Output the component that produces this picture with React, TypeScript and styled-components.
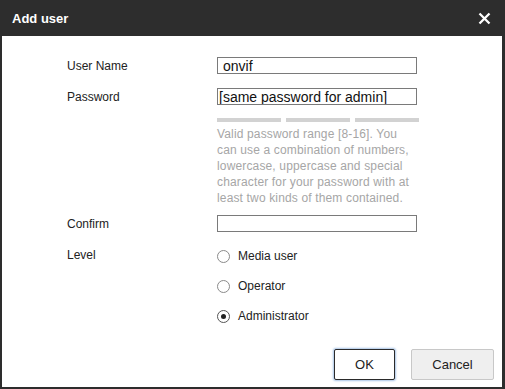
import React from "react";
import styled, { createGlobalStyle } from "styled-components";

const GlobalStyle = createGlobalStyle`
  html, body {
    margin: 0;
    padding: 0;
    background: #fff;
  }
  body {
    font-family: Arial, "Liberation Sans", sans-serif;
  }
`;

const Dialog = styled.div`
  width: 505px;
  height: 389px;
  box-sizing: border-box;
  display: flex;
  flex-direction: column;
  background: #2d2d2d;
  padding: 0 3px 2px 2px;
`;

const Header = styled.div`
  height: 36px;
  display: flex;
  align-items: center;
  justify-content: space-between;
  padding: 0 11px 0 10px;
`;

const Title = styled.div`
  color: #fff;
  font-size: 13px;
  font-weight: bold;
`;

const CloseButton = styled.button`
  background: none;
  border: none;
  padding: 0;
  width: 13px;
  height: 13px;
  display: flex;
  cursor: pointer;
`;

const Body = styled.div`
  flex: 1;
  background: #fff;
  display: flex;
  flex-direction: column;
  padding: 21px 8px 7px 65px;
`;

const Row = styled.div<{ $top?: number }>`
  display: flex;
  align-items: center;
  margin-top: ${(p) => p.$top ?? 0}px;
`;

const Label = styled.div`
  width: 150px;
  font-size: 12px;
  color: #222;
`;

const TextInput = styled.input<{ $pad?: number }>`
  box-sizing: border-box;
  width: 200px;
  height: 17px;
  border: 1px solid #7a7a7a;
  padding: 0 0 0 ${(p) => p.$pad ?? 5}px;
  font-family: Arial, "Liberation Sans", sans-serif;
  font-size: 14px;
  color: #111;
  outline: none;
`;

const Indent = styled.div<{ $top?: number }>`
  margin-left: 150px;
  margin-top: ${(p) => p.$top ?? 0}px;
`;

const Bars = styled.div`
  display: flex;
  gap: 5px;
  width: 202px;
`;

const Bar = styled.div`
  flex: 1;
  height: 4px;
  background: #d2d2d2;
`;

const Help = styled.div`
  width: 200px;
  font-size: 12px;
  line-height: 16px;
  letter-spacing: 0.15px;
  color: #a6a6a6;
`;

const LevelRow = styled.div`
  display: flex;
  align-items: flex-start;
  margin-top: 16px;
`;

const RadioList = styled.div`
  display: flex;
  flex-direction: column;
  gap: 14px;
`;

const RadioItem = styled.label`
  display: flex;
  align-items: center;
  height: 16px;
  font-size: 12px;
  color: #222;
  gap: 8px;
`;

const RadioDot = styled.span<{ $checked?: boolean }>`
  box-sizing: border-box;
  width: 13px;
  height: 13px;
  border-radius: 50%;
  border: 1px solid ${(p) => (p.$checked ? "#555" : "#8a8a8a")};
  display: flex;
  align-items: center;
  justify-content: center;
  &::after {
    content: "";
    width: 5px;
    height: 5px;
    border-radius: 50%;
    background: ${(p) => (p.$checked ? "#222" : "transparent")};
  }
`;

const Footer = styled.div`
  margin-top: auto;
  display: flex;
  justify-content: flex-end;
  gap: 16px;
`;

const Button = styled.button<{ $primary?: boolean }>`
  box-sizing: border-box;
  height: 31px;
  width: ${(p) => (p.$primary ? 61 : 83)}px;
  border-radius: 2px;
  font-family: Arial, "Liberation Sans", sans-serif;
  font-size: 13px;
  color: #222;
  background: ${(p) => (p.$primary ? "#fff" : "#efefef")};
  border: 1px solid ${(p) => (p.$primary ? "#2a2a2a" : "#c8c8c8")};
  box-shadow: ${(p) => (p.$primary ? "0 0 2px 1px #a9c4e6" : "none")};
  cursor: pointer;
`;

const levels = ["Media user", "Operator", "Administrator"];

export default function App() {
  return (
    <>
      <GlobalStyle />
      <Dialog>
        <Header>
          <Title>Add user</Title>
          <CloseButton aria-label="close">
            <svg width="13" height="13" viewBox="0 0 13 13">
              <path d="M1.5 1.5 L11.5 11.5 M11.5 1.5 L1.5 11.5" stroke="#fff" strokeWidth="2.3" />
            </svg>
          </CloseButton>
        </Header>
        <Body>
          <Row>
            <Label>User Name</Label>
            <TextInput defaultValue="onvif" />
          </Row>
          <Row $top={14}>
            <Label>Password</Label>
            <TextInput $pad={1} defaultValue="[same password for admin]" />
          </Row>
          <Indent $top={13}>
            <Bars>
              <Bar />
              <Bar />
              <Bar />
            </Bars>
          </Indent>
          <Indent $top={4}>
            <Help>
              Valid password range [8-16]. You can use a combination of numbers, lowercase, uppercase and
              special character for your password with at least two kinds of them contained.
            </Help>
          </Indent>
          <Row $top={9}>
            <Label>Confirm</Label>
            <TextInput />
          </Row>
          <LevelRow>
            <Label>Level</Label>
            <RadioList>
              {levels.map((l) => (
                <RadioItem key={l}>
                  <RadioDot $checked={l === "Administrator"} />
                  {l}
                </RadioItem>
              ))}
            </RadioList>
          </LevelRow>
          <Footer>
            <Button $primary>OK</Button>
            <Button>Cancel</Button>
          </Footer>
        </Body>
      </Dialog>
    </>
  );
}
